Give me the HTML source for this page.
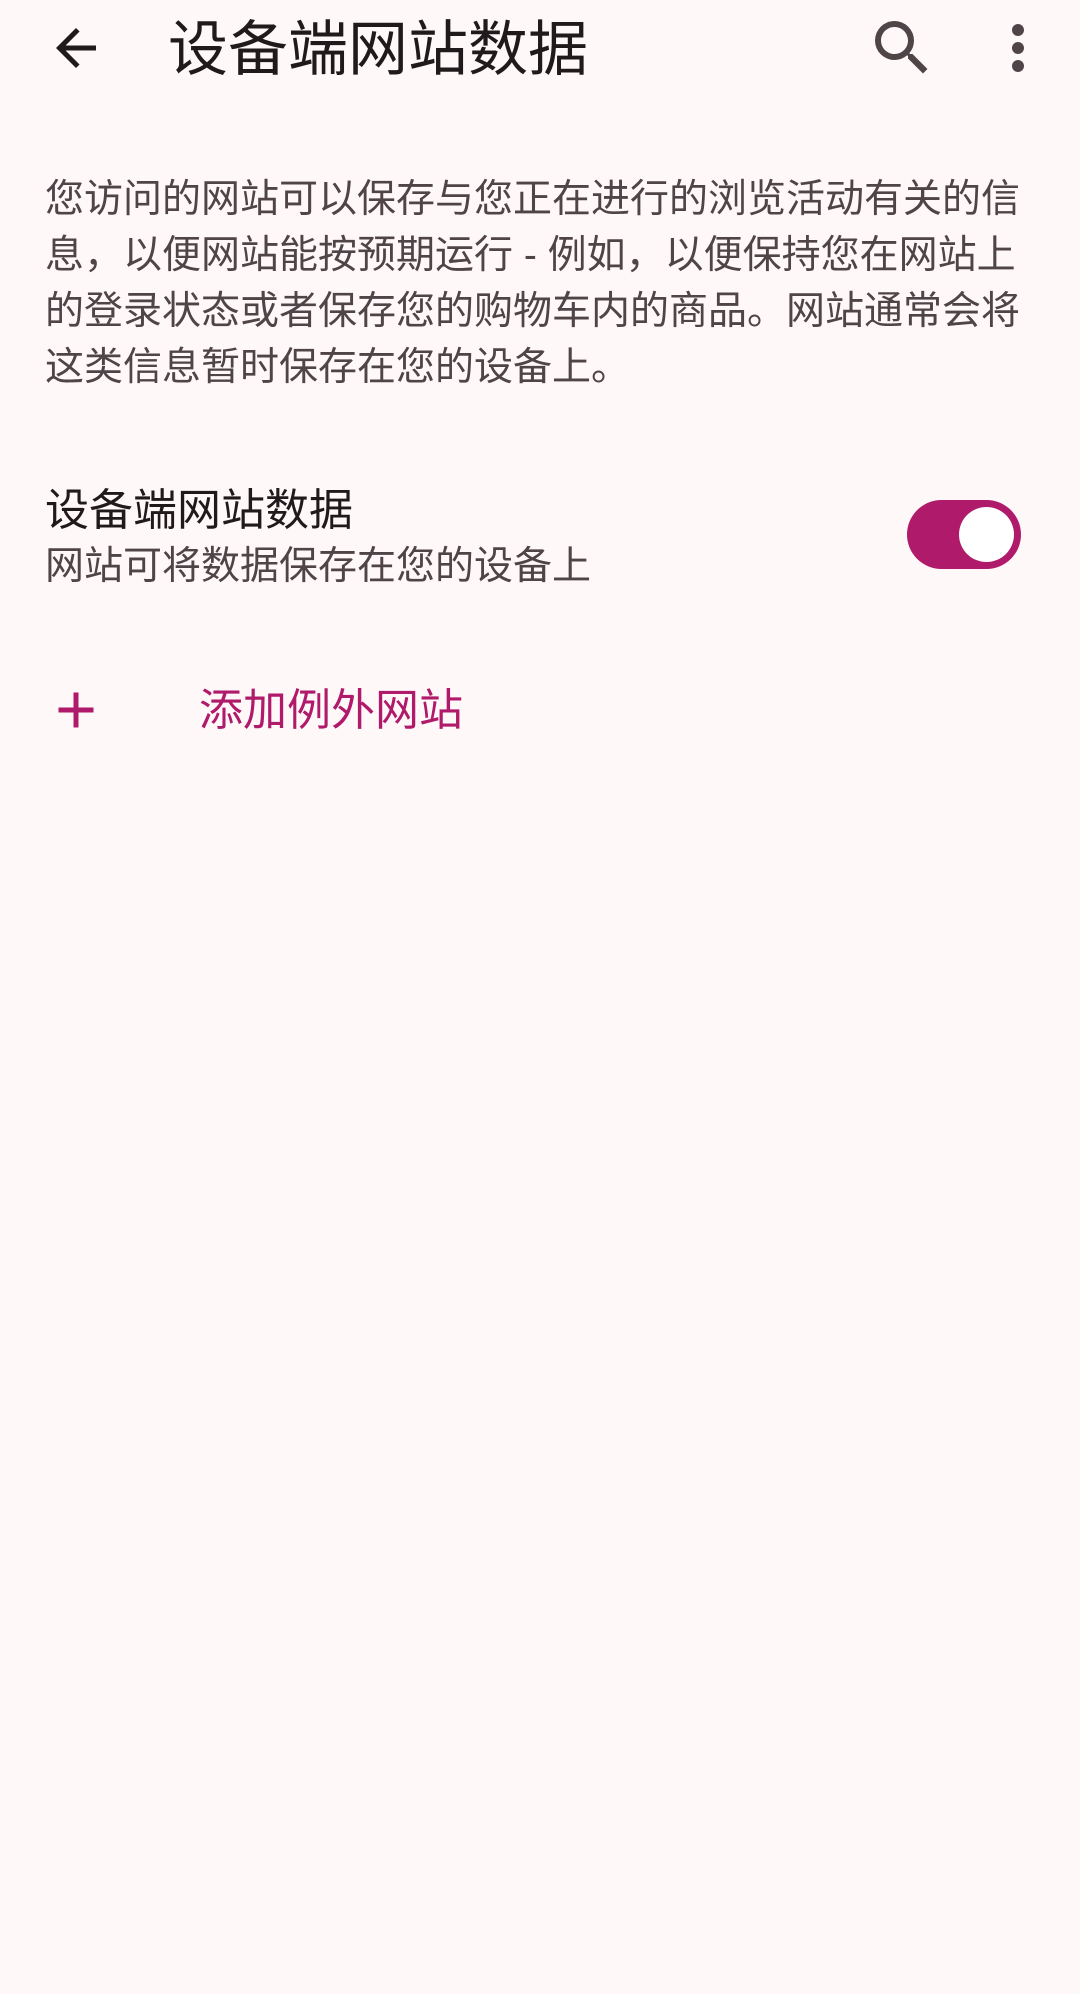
<!DOCTYPE html>
<html><head><meta charset="utf-8"><style>
body{margin:0;width:1080px;height:1994px;background:#fff8f8;font-family:"Liberation Sans","Noto Sans CJK SC",sans-serif;position:relative;overflow:hidden}
.a{position:absolute;white-space:nowrap}
</style></head><body>
<svg class="a" style="left:46px;top:18px" width="60" height="60" viewBox="0 0 24 24"><path d="M20 11H7.83l5.59-5.59L12 4l-8 8 8 8 1.41-1.41L7.83 13H20v-2z" fill="#201a1c"/></svg>
<div class="a" style="left:168px;top:14px;font-size:60px;line-height:72px;color:#201a1c">设备端网站数据</div>
<svg class="a" style="left:866px;top:12px" width="72" height="72" viewBox="0 0 24 24"><path d="M15.5 14h-.79l-.28-.27A6.470 6.470 0 0 0 16 9.5 6.5 6.5 0 1 0 9.5 16c1.61 0 3.09-.59 4.23-1.57l.27.28v.79l5 4.99L20.490 19l-4.990-5zm-6 0C7.010 14 5 11.990 5 9.5S7.010 5 9.5 5 14 7.010 14 9.5 11.990 14 9.5 14z" fill="#4f4448"/></svg>
<svg class="a" style="left:982px;top:12px" width="72" height="72" viewBox="0 0 24 24"><path d="M12 8c1.1 0 2-.9 2-2s-.9-2-2-2-2 .9-2 2 .9 2 2 2zm0 2c-1.1 0-2 .9-2 2s.9 2 2 2 2-.9 2-2-.9-2-2-2zm0 6c-1.1 0-2 .9-2 2s.9 2 2 2 2-.9 2-2-.9-2-2-2z" fill="#4f4448"/></svg>
<div class="a" style="left:45px;top:172px;font-size:39px;line-height:56px;color:#4f4448;white-space:normal;width:1000px">您访问的网站可以保存与您正在进行的浏览活动有关的信息，以便网站能按预期运行 - 例如，以便保持您在网站上的登录状态或者保存您的购物车内的商品。网站通常会将这类信息暂时保存在您的设备上。</div>
<div class="a" style="left:45px;top:483px;font-size:44px;line-height:56px;color:#201a1c">设备端网站数据</div>
<div class="a" style="left:45px;top:539px;font-size:39px;line-height:56px;color:#4f4448">网站可将数据保存在您的设备上</div>
<div class="a" style="left:907px;top:500px;width:114px;height:69px;border-radius:35px;background:#b01a6b"></div>
<div class="a" style="left:959px;top:507px;width:55px;height:55px;border-radius:50%;background:#fff"></div>
<svg class="a" style="left:46px;top:680px" width="60" height="60" viewBox="0 0 24 24"><path d="M19 13h-6v6h-2v-6H5v-2h6V5h2v6h6v2z" fill="#b01a6b"/></svg>
<div class="a" style="left:199px;top:683px;font-size:44px;line-height:56px;color:#b01a6b">添加例外网站</div>
</body></html>
